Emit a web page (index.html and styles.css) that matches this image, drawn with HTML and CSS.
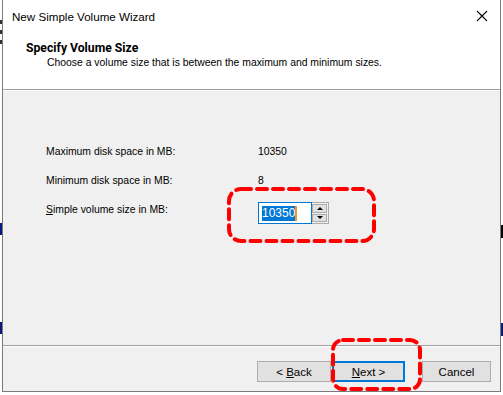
FILE: index.html
```html
<!DOCTYPE html>
<html lang="en">
<head>
    <meta charset="UTF-8">
    <title>New Simple Volume Wizard</title>
    <link rel="stylesheet" href="styles.css">
</head>
<body>
    <div class="desktop">
        <div class="window">
            <div class="titlebar">
                <span class="title">New Simple Volume Wizard</span>
                <svg class="close" width="12" height="12" viewBox="0 0 12 12">
                    <path d="M1 1 L11 11 M11 1 L1 11" stroke="#000" stroke-width="1.1" fill="none"/>
                </svg>
            </div>
            <div class="header">
                <div class="heading">Specify Volume Size</div>
                <div class="subheading">Choose a volume size that is between the maximum and minimum sizes.</div>
            </div>
            <div class="content">
                <div class="row">
                    <span class="label">Maximum disk space in MB:</span>
                    <span class="value">10350</span>
                </div>
                <div class="row">
                    <span class="label">Minimum disk space in MB:</span>
                    <span class="value">8</span>
                </div>
                <div class="row row-input">
                    <span class="label"><u>S</u>imple volume size in MB:</span>
                    <div class="spin">
                        <div class="spin-field"><span class="selected">10350</span><span class="caret"></span></div>
                        <div class="spin-buttons">
                            <div class="spin-btn"><span class="arrow-up"></span></div>
                            <div class="spin-btn"><span class="arrow-down"></span></div>
                        </div>
                    </div>
                    <svg class="mark mark-input" width="150" height="57" viewBox="0 0 150 57">
                        <rect x="2" y="2" width="145" height="52" rx="12" ry="12" fill="none" stroke="#f00" stroke-width="4" stroke-dasharray="10 6" stroke-linecap="round"/>
                    </svg>
                </div>
            </div>
            <div class="footer">
                <button class="btn">&lt; <u>B</u>ack</button>
                <div class="next-wrap">
                    <button class="btn btn-default"><u>N</u>ext &gt;</button>
                    <svg class="mark mark-next" width="92" height="54" viewBox="0 0 92 54">
                        <rect x="2" y="2" width="87" height="49" rx="10" ry="10" fill="none" stroke="#f00" stroke-width="4" stroke-dasharray="10 6" stroke-linecap="round"/>
                    </svg>
                </div>
                <button class="btn btn-cancel">Cancel</button>
            </div>
        </div>
        <!-- bits of the windows behind -->
        <div class="behind b1"></div>
        <div class="behind b2"></div>
        <div class="behind b3"></div>
        <div class="behind b4"></div>
        <div class="behind b5"></div>
    </div>
</body>
</html>
```

FILE: styles.css
```css
body {
    margin: 0;
    font-family: "Liberation Sans", Arial, sans-serif;
    font-size: 10.4px;
    color: #000;
    background-color: #fff;
}
.desktop {
    position: relative;
    width: 503px;
    height: 395px;
    overflow: hidden;
    background-color: #fff;
}
.window {
    position: relative;
    z-index: 1;
    margin-left: 2px;
    width: 497px;
    height: 391px;
    border-left: 1px solid #7a7a7a;
    border-right: 1px solid #7a7a7a;
    border-bottom: 1px solid #7a7a7a;
    display: flex;
    flex-direction: column;
    background-color: #f0f0f0;
}
.titlebar {
    height: 32px;
    box-sizing: border-box;
    background-color: #fff;
    display: flex;
    align-items: center;
    justify-content: space-between;
    padding: 0 12px 0 9px;
}
.title {
    font-size: 11.6px;
    color: #000;
}
.header {
    background-color: #fff;
    height: 58px;
    border-bottom: 1px solid #a0a0a0;
    box-shadow: 0 1px 0 #fff;
    padding: 9px 0 0 23px;
    box-sizing: border-box;
}
.heading {
    font-family: Roboto, "Liberation Sans", sans-serif;
    font-weight: bold;
    font-size: 12.2px;
    line-height: 14px;
}
.subheading {
    padding-left: 21px;
    line-height: 14px;
    margin-top: 1px;
}
.content {
    flex: 1;
    padding: 55px 0 0 43px;
    display: flex;
    flex-direction: column;
    gap: 15px;
}
.row {
    display: flex;
    align-items: flex-start;
    line-height: 14px;
    position: relative;
}
.label {
    width: 212px;
}
.spin {
    display: flex;
    margin-top: -1px;
}
.spin-field {
    width: 54px;
    height: 22px;
    border: 1px solid #0078d7;
    background-color: #fff;
    display: flex;
    align-items: center;
    padding-left: 3px;
    box-sizing: border-box;
}
.selected {
    background-color: #0078d7;
    color: #fff;
    font-size: 12px;
    line-height: 15px;
}
.caret {
    width: 2px;
    height: 15px;
    background-color: #f7931e;
}
.spin-buttons {
    display: flex;
    flex-direction: column;
    border: 1px solid #adadad;
    border-left: none;
    width: 17px;
    height: 22px;
    box-sizing: border-box;
    padding: 1px 1px 1px 0;
    gap: 1px;
    background-color: #f0f0f0;
}
.spin-btn {
    flex: 1;
    background-color: #e1e1e1;
    border: 1px solid #adadad;
    display: flex;
    align-items: center;
    justify-content: center;
}
.arrow-up {
    border-left: 3px solid transparent;
    border-right: 3px solid transparent;
    border-bottom: 3px solid #000;
}
.arrow-down {
    border-left: 3px solid transparent;
    border-right: 3px solid transparent;
    border-top: 3px solid #000;
}
.mark {
    position: absolute;
}
.mark-input {
    left: 181px;
    top: -16px;
}
.footer {
    height: 46px;
    box-sizing: border-box;
    border-top: 1px solid #a0a0a0;
    box-shadow: inset 0 1px 0 #fff;
    display: flex;
    align-items: flex-start;
    padding: 15px 0 0 254px;
}
.btn {
    width: 74px;
    height: 21px;
    background-color: #e1e1e1;
    border: 1px solid #adadad;
    font-family: "Liberation Sans", Arial, sans-serif;
    font-size: 11.5px;
    padding: 0;
    color: #000;
}
.next-wrap {
    position: relative;
    margin-left: 1px;
}
.btn-default {
    width: 73px;
    border: 2px solid #0078d7;
}
.mark-next {
    left: -1px;
    top: -23px;
}
.btn-cancel {
    margin-left: 17px;
    width: 69px;
}
.behind {
    position: absolute;
}
.b1 {
    left: 0;
    top: 18px;
    width: 2px;
    height: 30px;
    background: repeating-linear-gradient(#fff 0 2px, #333 2px 6px, #fff 6px 10px);
}
.b2 {
    left: 0;
    top: 223px;
    width: 2px;
    height: 12px;
    background-color: #0a1a7a;
}
.b3 {
    left: 0;
    top: 322px;
    width: 2px;
    height: 12px;
    background-color: #0a1a7a;
}
.b4 {
    left: 501px;
    top: 225px;
    width: 2px;
    height: 13px;
    background-color: #000;
}
.b5 {
    left: 501px;
    top: 323px;
    width: 2px;
    height: 13px;
    background-color: #0a1a7a;
}
```
